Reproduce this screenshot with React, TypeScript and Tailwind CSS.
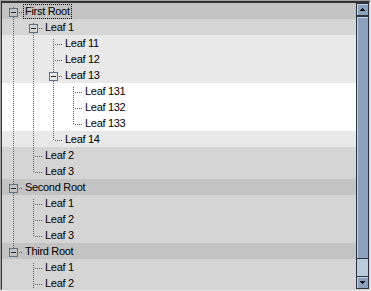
import React from 'react';

interface TreeNode {
  label: string;
  children?: TreeNode[];
}

interface Row {
  label: string;
  depth: number;
  first: boolean;
  last: boolean;
  anc: boolean[];
  open: boolean;
}

const tree: TreeNode[] = [
  {
    label: 'First Root',
    children: [
      {
        label: 'Leaf 1',
        children: [
          { label: 'Leaf 11' },
          { label: 'Leaf 12' },
          { label: 'Leaf 13', children: [{ label: 'Leaf 131' }, { label: 'Leaf 132' }, { label: 'Leaf 133' }] },
          { label: 'Leaf 14' },
        ],
      },
      { label: 'Leaf 2' },
      { label: 'Leaf 3' },
    ],
  },
  { label: 'Second Root', children: [{ label: 'Leaf 1' }, { label: 'Leaf 2' }, { label: 'Leaf 3' }] },
  { label: 'Third Root', children: [{ label: 'Leaf 1' }, { label: 'Leaf 2' }, { label: 'Leaf 3' }] },
];

const flatten = (nodes: TreeNode[], depth: number, anc: boolean[], out: Row[]) => {
  nodes.forEach((n, i) => {
    const last = i === nodes.length - 1;
    out.push({ label: n.label, depth, first: i === 0, last, anc, open: !!n.children });
    if (n.children) flatten(n.children, depth + 1, [...anc, last], out);
  });
  return out;
};

const rows = flatten(tree, 0, [], []);

const rowBg = ['bg-[#c3c3c3]', 'bg-[#d5d5d5]', 'bg-[#e9e9e9]', 'bg-white'];
const boxFill = ['#c3c3c3', '#d5d5d5', '#e9e9e9', '#ffffff'];
const DOT = '#56606e';

const Guides = ({ row }: { row: Row }) => {
  const d = row.depth;
  const w = 21 + 20 * d;
  const lx = 11 + 20 * d + 0.5;
  return (
    <svg width={w} height={16} className="shrink-0" shapeRendering="crispEdges">
      {row.anc.map((isLast, k) =>
        isLast ? null : (
          <line key={k} x1={11 + 20 * k + 0.5} x2={11 + 20 * k + 0.5} y1={0} y2={16} stroke={DOT} strokeDasharray="1 1" />
        )
      )}
      <line x1={lx} x2={lx} y1={row.first ? 4 : 0} y2={row.last ? 10 : 16} stroke={DOT} strokeDasharray="1 1" />
      <line x1={lx + 1.5} x2={w - 1} y1={9.5} y2={9.5} stroke={DOT} strokeDasharray="1 1" />
      {row.open && (
        <g>
          <rect x={7.5 + 20 * d} y={5.5} width={8} height={8} fill={boxFill[d]} stroke="#5d6e87" />
          <line x1={9 + 20 * d} x2={14 + 20 * d} y1={9.5} y2={9.5} stroke="#1e2836" />
        </g>
      )}
    </svg>
  );
};

const Arrow = ({ up }: { up?: boolean }) => (
  <svg width={5} height={3} shapeRendering="crispEdges">
    <polygon points={up ? '2.5,0 5,3 0,3' : '0,0 5,0 2.5,3'} fill="#000" />
  </svg>
);

export default function App() {
  return (
    <div
      className="w-[371px] h-[291px] border border-t-[#a0a0a0] border-l-[#a0a0a0] border-r-[#e6e6e6] border-b-[#e6e6e6] bg-[#d4d4d4]"
      style={{ fontFamily: '"Liberation Sans", Arial, sans-serif' }}
    >
      <div className="flex h-full border-t-2 border-l border-r border-b border-t-[#343434] border-l-[#343434] border-r-[#d2d2d2] border-b-[#d2d2d2]">
        <div className="flex-1 overflow-hidden">
          {rows.map((row, i) => (
            <div key={i} className={`flex h-4 items-start ${rowBg[row.depth]}`}>
              <Guides row={row} />
              <span
                className={`mt-[1px] h-[15px] px-[1px] border text-[11px] leading-[13px] tracking-[-0.3px] text-black whitespace-nowrap ${
                  i === 0 ? 'border-dotted border-black' : 'border-transparent'
                }`}
              >
                {row.label}
              </span>
            </div>
          ))}
        </div>
        <div className="w-[13px] flex flex-col">
          <div className="h-[13px] border border-[#2b3541] bg-[#8ba1bd] shadow-[inset_1px_1px_0_#c3d0e0] flex items-center justify-center">
            <Arrow up />
          </div>
          <div className="h-[243px] border border-[#2b3541] bg-[#8ba1bd] shadow-[inset_1px_1px_0_#c3d0e0]" />
          <div className="flex-1 bg-[#bccbdc] border-x border-[#2b3541]" />
          <div className="h-[13px] border border-[#2b3541] bg-[#8ba1bd] shadow-[inset_1px_1px_0_#c3d0e0] flex items-center justify-center">
            <Arrow />
          </div>
        </div>
      </div>
    </div>
  );
}
